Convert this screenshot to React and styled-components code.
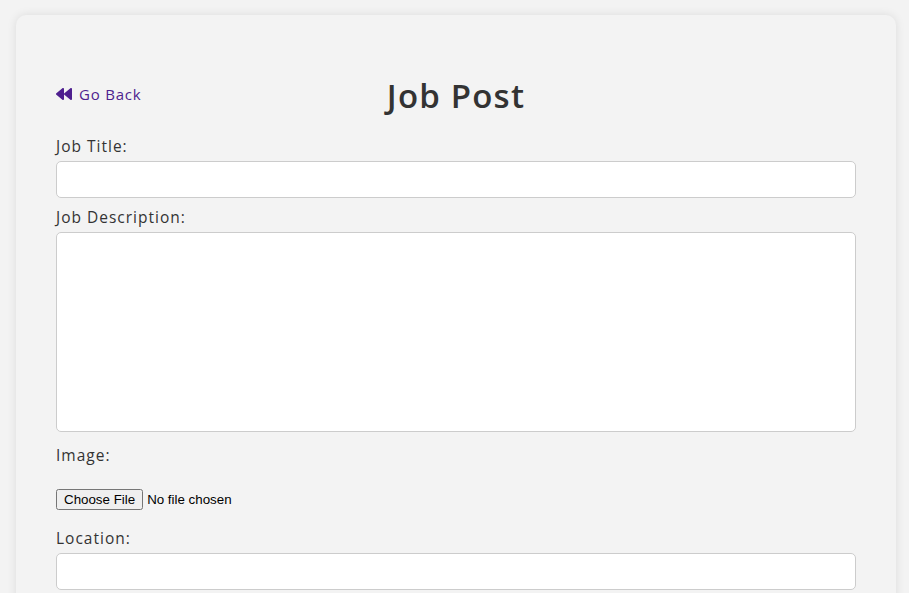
import React from "react";
import styled, { createGlobalStyle } from "styled-components";
import { FaBackward } from "react-icons/fa";

const Global = createGlobalStyle`
  html, body { margin: 0; padding: 0; background: #f3f3f3; overflow: hidden; }
  body { font-family: "Open Sans", "Noto Sans", sans-serif; color: #333; }
  * { box-sizing: border-box; }
`;

const Page = styled.div`
  padding: 15px 13px 0 16px;
  height: 593px;
`;

const Card = styled.div`
  background: #f3f3f3;
  border-radius: 10px;
  box-shadow: 0 0 10px rgba(0, 0, 0, 0.1);
  padding: 58px 40px 40px;
  min-height: 700px;
`;

const Header = styled.div`
  display: grid;
  grid-template-columns: 1fr auto 1fr;
  align-items: center;
  height: 40px;
  margin-bottom: 23px;
`;

const BackLink = styled.a`
  display: inline-flex;
  align-items: center;
  gap: 7px;
  color: #4e1f8f;
  font-size: 15px;
  letter-spacing: 0.8px;
  text-decoration: none;
  cursor: pointer;
  justify-self: start;
  margin-top: -4px;
`;

const Title = styled.h1`
  margin: 0;
  font-size: 33px;
  font-weight: 600;
  color: #333;
  letter-spacing: 1.2px;
`;

const Form = styled.form`
  display: flex;
  flex-direction: column;
`;

const Label = styled.label`
  display: block;
  font-size: 15.5px;
  letter-spacing: 1px;
  line-height: 20px;
  margin-bottom: ${(p) => p.$gap || 5}px;
`;

const TextInput = styled.input`
  display: block;
  width: 100%;
  height: 37px;
  border: 1px solid #ccc;
  border-radius: 5px;
  background: #fff;
  padding: 0 10px;
  font: inherit;
  margin-bottom: 9px;
`;

const TextArea = styled.textarea`
  display: block;
  width: 100%;
  height: 200px;
  border: 1px solid #ccc;
  border-radius: 5px;
  background: #fff;
  padding: 10px;
  font: inherit;
  resize: none;
  margin-bottom: 13px;
`;

const FileInput = styled.input`
  display: block;
  font-family: "Liberation Sans", Arial, sans-serif;
  font-size: 13.33px;
  color: #000;
  margin-bottom: 18px;
`;

export default function App() {
  return (
    <>
      <Global />
      <Page>
        <Card>
          <Header>
            <BackLink>
              <FaBackward size={16} />
              Go Back
            </BackLink>
            <Title>Job Post</Title>
            <span />
          </Header>
          <Form>
            <Label>Job Title:</Label>
            <TextInput type="text" />
            <Label>Job Description:</Label>
            <TextArea />
            <Label $gap={24}>Image:</Label>
            <FileInput type="file" />
            <Label>Location:</Label>
            <TextInput type="text" />
          </Form>
        </Card>
      </Page>
    </>
  );
}
